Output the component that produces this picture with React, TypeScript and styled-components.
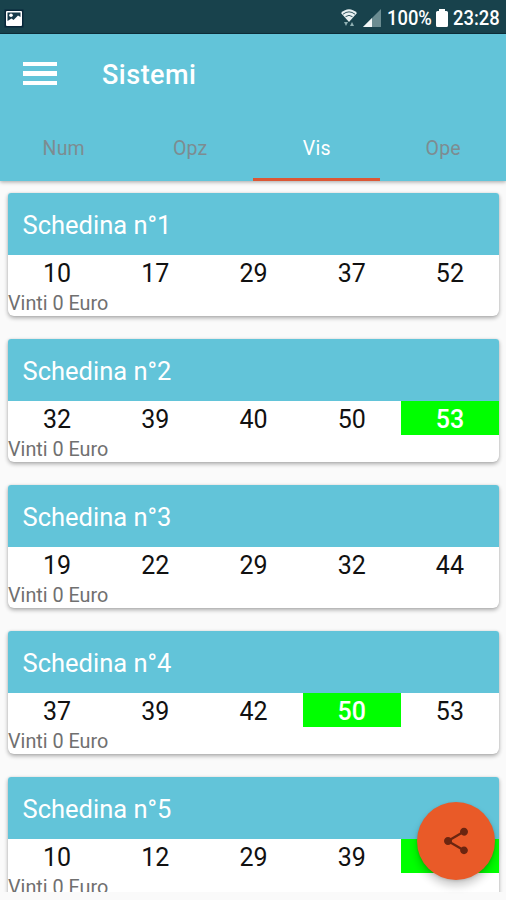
import React from "react";
import styled, { createGlobalStyle } from "styled-components";

const GlobalStyle = createGlobalStyle`
  *, *::before, *::after { box-sizing: border-box; }
  body { margin: 0; background: #fafafa; font-family: Roboto, "Liberation Sans", sans-serif; }
`;

const Screen = styled.div`
  position: relative;
  display: flex;
  flex-direction: column;
  width: 506px;
  height: 900px;
  overflow: hidden;
  background: #fafafa;
`;

const StatusBar = styled.div`
  flex: none;
  display: flex;
  align-items: center;
  justify-content: space-between;
  height: 34px;
  padding: 3px 6px 0 4px;
  background: #18424c;
  border-bottom: 1px solid #0c303c;
  color: #fff;
`;

const StatusGroup = styled.div`
  display: flex;
  align-items: center;
`;

const StatusText = styled.span<{ $width: number }>`
  display: block;
  width: ${(p) => p.$width}px;
  font-size: 20px;
  font-weight: 500;
  line-height: 30px;
  white-space: nowrap;

  span {
    display: inline-block;
    transform: scaleX(0.92);
    transform-origin: left center;
  }
`;

const Header = styled.header`
  flex: none;
  position: relative;
  z-index: 1;
  height: 147px;
  background: #62c4d9;
  box-shadow: 0 1px 4px rgba(0, 0, 0, 0.35);
`;

const TitleRow = styled.div`
  display: flex;
  align-items: center;
  height: 81px;
  padding-left: 23px;
`;

const MenuButton = styled.button`
  display: flex;
  flex-direction: column;
  gap: 5px;
  width: 34px;
  margin: 0 45px 2px 0;
  padding: 0;
  border: 0;
  background: none;
`;

const MenuBar = styled.span`
  height: 4.4px;
  background: #fff;
`;

const Title = styled.h1`
  margin: 0;
  padding-top: 1px;
  color: #fff;
  font-size: 27px;
  font-weight: 500;
  letter-spacing: 0.5px;
  line-height: 32px;
`;

const Tabs = styled.nav`
  display: grid;
  grid-template-columns: repeat(4, 1fr);
  height: 66px;
`;

const Tab = styled.button<{ $active: boolean }>`
  padding: 5px 0 0 1px;
  border: 0;
  border-bottom: 3px solid ${(p) => (p.$active ? "#db5735" : "transparent")};
  background: none;
  color: ${(p) => (p.$active ? "#fff" : "#7d8c91")};
  font: 400 19.5px/24px Roboto, sans-serif;
  letter-spacing: 0.2px;
`;

const List = styled.main`
  flex: none;
  display: flex;
  flex-direction: column;
  gap: 23px;
  height: 711px;
  padding: 12px 7px 0 8px;
  overflow: hidden;
`;

const Card = styled.section`
  flex: none;
  height: 123px;
  border-radius: 3px 3px 6px 6px;
  background: #fff;
  box-shadow: 0 2px 4px rgba(0, 0, 0, 0.32), 0 0 2px rgba(0, 0, 0, 0.1);
`;

const CardTitle = styled.h2`
  height: 62px;
  margin: 0;
  padding: 1px 14.5px 0;
  border-radius: 3px 3px 0 0;
  background: #62c4d9;
  color: #fff;
  font-size: 25.5px;
  font-weight: 400;
  line-height: 62px;
`;

const Numbers = styled.div`
  display: grid;
  grid-template-columns: repeat(5, 1fr);
  height: 34px;
`;

const NumberCell = styled.span<{ $hit: boolean }>`
  padding-top: 3px;
  background: ${(p) => (p.$hit ? "#00ff00" : "transparent")};
  color: ${(p) => (p.$hit ? "#fff" : "#111")};
  font-size: 25px;
  font-weight: ${(p) => (p.$hit ? 500 : 400)};
  line-height: 31px;
  text-align: center;
`;

const Winnings = styled.p`
  margin: 3px 0 0;
  color: #707070;
  font-size: 19.8px;
  line-height: 24px;
`;

const ShareButton = styled.button`
  position: absolute;
  right: 11px;
  bottom: 20px;
  z-index: 2;
  display: flex;
  align-items: center;
  justify-content: center;
  width: 78px;
  height: 78px;
  padding: 0;
  border: 0;
  border-radius: 50%;
  background: #e95a28;
  box-shadow: 0 6px 8px rgba(0, 0, 0, 0.2), 0 1px 3px rgba(0, 0, 0, 0.14);
`;

const ImageIcon = () => (
  <svg width="20" height="19" viewBox="0 0 20 19">
    <rect x="0.5" y="0.5" width="19" height="18" fill="#08273a" />
    <rect x="2" y="2" width="16" height="15" rx="1" fill="#fff" />
    <path d="M3.5 3.5H16.500V8L14 6.500 9.500 11 7.500 9.500 3.500 12Z" fill="#173a4a" />
    <circle cx="7" cy="6.2" r="1.8" fill="#fff" />
  </svg>
);

const WifiIcon = () => (
  <svg width="18" height="20" viewBox="0 0 18 20">
    <path d="M1 5Q9 -2.500 17 5L9 14Z" fill="#e9f1f2" />
    <path d="M3 6.200Q9 1.500 15 6.200M5.500 8.700Q9 6 12.500 8.700" fill="none" stroke="#31545e" strokeWidth="1" />
    <path d="M4 14H8L6 18ZM10 18 12 14 14 18Z" fill="#8fb0b2" />
  </svg>
);

const SignalIcon = () => (
  <svg width="18" height="18" viewBox="0 0 18 18">
    <path d="M0 18 18 0V18Z" fill="#6b8c91" />
    <path d="M0 18 9 9V18Z" fill="#f2f7f7" />
  </svg>
);

const BatteryIcon = () => (
  <svg width="12" height="18" viewBox="0 0 12 18">
    <path d="M3 0H9V2H10.500Q12 2 12 3.500V16.500Q12 18 10.500 18H1.500Q0 18 0 16.500V3.500Q0 2 1.500 2H3Z" fill="#fff" />
  </svg>
);

const ShareIcon = () => (
  <svg width="32" height="32" viewBox="0 0 24 24" fill="#6b2510">
    <path d="M18 16.080c-.76 0-1.440.3-1.960.77L8.910 12.700c.05-.23.090-.46.090-.7s-.040-.47-.090-.7l7.050-4.110c.54.5 1.250.81 2.040.81 1.660 0 3-1.340 3-3s-1.340-3-3-3-3 1.340-3 3c0 .24.040.47.090.7L8.040 9.810C7.500 9.310 6.790 9 6 9c-1.660 0-3 1.340-3 3s1.340 3 3 3c.79 0 1.500-.31 2.040-.81l7.120 4.160c-.05.21-.08.43-.08.65 0 1.610 1.310 2.920 2.920 2.920s2.920-1.310 2.920-2.920-1.310-2.920-2.920-2.920z" />
  </svg>
);

const SignalSlot = styled.span`
  display: flex;
  margin: 0 6px 0 5px;
`;

const BatterySlot = styled.span`
  display: flex;
  margin-right: 5px;
`;

const tabs = ["Num", "Opz", "Vis", "Ope"];

const tickets: { numbers: number[]; hit?: number }[] = [
  { numbers: [10, 17, 29, 37, 52] },
  { numbers: [32, 39, 40, 50, 53], hit: 53 },
  { numbers: [19, 22, 29, 32, 44] },
  { numbers: [37, 39, 42, 50, 53], hit: 50 },
  { numbers: [10, 12, 29, 39, 53], hit: 53 },
];

export default function App() {
  return (
    <>
      <GlobalStyle />
      <Screen>
        <StatusBar>
          <ImageIcon />
          <StatusGroup>
            <WifiIcon />
            <SignalSlot>
              <SignalIcon />
            </SignalSlot>
            <StatusText $width={49}>
              <span>100%</span>
            </StatusText>
            <BatterySlot>
              <BatteryIcon />
            </BatterySlot>
            <StatusText $width={47}>
              <span>23:28</span>
            </StatusText>
          </StatusGroup>
        </StatusBar>
        <Header>
          <TitleRow>
            <MenuButton aria-label="Menu">
              <MenuBar />
              <MenuBar />
              <MenuBar />
            </MenuButton>
            <Title>Sistemi</Title>
          </TitleRow>
          <Tabs>
            {tabs.map((name) => (
              <Tab key={name} $active={name === "Vis"}>
                {name}
              </Tab>
            ))}
          </Tabs>
        </Header>
        <List>
          {tickets.map((ticket, index) => (
            <Card key={index}>
              <CardTitle>Schedina n°{index + 1}</CardTitle>
              <Numbers>
                {ticket.numbers.map((n) => (
                  <NumberCell key={n} $hit={n === ticket.hit}>
                    {n}
                  </NumberCell>
                ))}
              </Numbers>
              <Winnings>Vinti 0 Euro</Winnings>
            </Card>
          ))}
        </List>
        <ShareButton aria-label="Condividi">
          <ShareIcon />
        </ShareButton>
      </Screen>
    </>
  );
}
